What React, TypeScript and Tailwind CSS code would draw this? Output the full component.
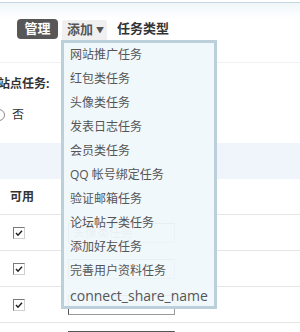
import React from "react";

const items = [
  "网站推广任务",
  "红包类任务",
  "头像类任务",
  "发表日志任务",
  "会员类任务",
  "QQ 帐号绑定任务",
  "验证邮箱任务",
  "论坛帖子类任务",
  "添加好友任务",
  "完善用户资料任务",
];

const rows = ["头像类任务", "", "", ""];

function Check() {
  return (
    <span className="flex h-[12px] w-[12px] items-center justify-center border border-b-[#cfcfcf] border-l-[#7a7a7a] border-r-[#cfcfcf] border-t-[#7a7a7a] bg-white">
      <svg width="10" height="10" viewBox="0 0 10 10">
        <path d="M2 5 L4 7.2 L8 2.8" fill="none" stroke="#222" strokeWidth="1.5" />
      </svg>
    </span>
  );
}

export default function App() {
  return (
    <div className="relative h-[332px] w-[300px] overflow-hidden bg-white font-['Open_Sans','Noto_Sans_CJK_SC',sans-serif] text-[12px] text-[#333]">
      <div className="h-[2px] bg-white" />
      <div className="h-px bg-[#c6d6df]" />
      <div className="h-[16px] bg-gradient-to-b from-[#f0f6f9] to-white" />
      <div className="flex h-[21px] items-start pl-[17px]">
        <div className="flex h-[20px] w-[41px] items-center justify-center rounded-[4px] bg-[#575757] text-[13px] font-bold text-white">
          管理
        </div>
        <div className="ml-[4px] mt-[1px] flex h-[20px] w-[45px] items-center rounded-t-[3px] bg-[#f0f0f0] pl-[5px] text-[13px] font-bold text-[#555]">
          添加
          <span className="ml-[3px] text-[8px] text-[#555]">▼</span>
        </div>
        <div className="ml-[10px] flex h-[20px] items-center text-[13px] font-bold text-[#333]">
          任务类型
        </div>
      </div>
      <div className="h-[22px]" />
      <div className="border-t border-[#eef2f4]">
        <div className="flex h-[42px] items-center font-bold">
          <span className="-ml-[2px]">站点任务:</span>
        </div>
        <div className="flex h-[20px] items-center">
          <span className="-ml-[7px] h-[12px] w-[12px] rounded-full border border-[#8a8a8a] bg-white" />
          <span className="ml-[7px]">否</span>
        </div>
        <div className="h-[18px]" />
      </div>
      <div className="h-[36px] bg-[#f0f5fb]" />
      <div className="flex h-[36px] items-center border-b border-[#e6e6e6] pl-[10px] font-bold">
        可用
      </div>
      {rows.map((t, i) => (
        <div key={i} className="flex h-[36px] items-center border-b border-[#e6e6e6]">
          <div className="w-[68px] pl-[13px]">
            <Check />
          </div>
          <div className="flex h-[20px] w-[107px] items-center border border-b-[#9a9a9a] border-l-[#555] border-r-[#9a9a9a] border-t-[#555] bg-white pl-[4px] text-[#555]">
            {t}
          </div>
        </div>
      ))}
      <div className="absolute left-[61px] top-[40px] h-[269px] w-[156px] border-[3px] border-[#bcd0db] bg-[#f0f8fc]/95 pl-[6px] text-[#555]">
        {items.map((it) => (
          <div key={it} className="h-[24px] whitespace-nowrap leading-[24px]">
            {it}
          </div>
        ))}
        <div className="h-[24px] whitespace-nowrap text-[14px] leading-[26px]">connect_share_name</div>
      </div>
    </div>
  );
}
